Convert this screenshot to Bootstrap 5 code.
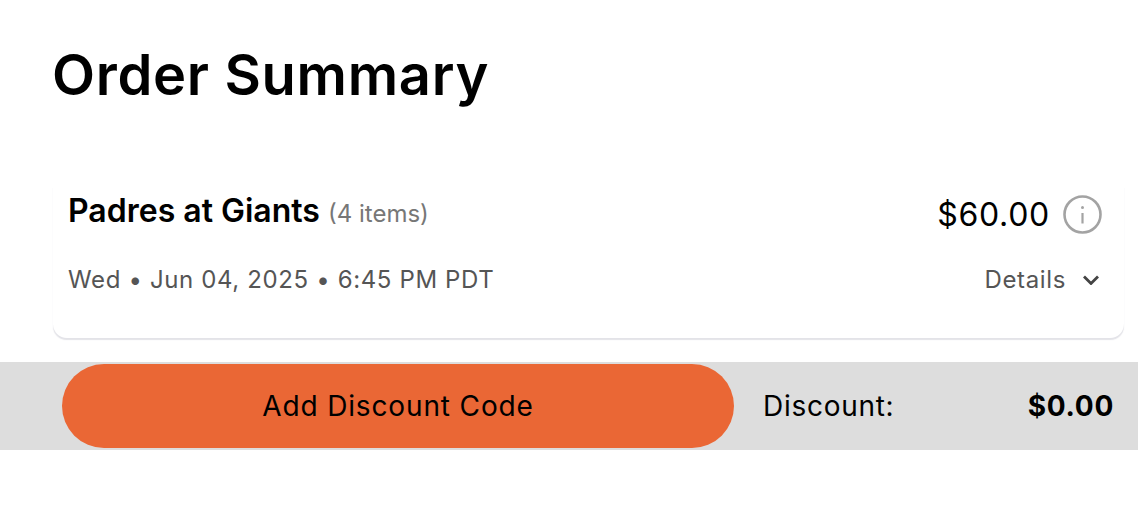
<!DOCTYPE html>
<html lang="en">
<head>
<meta charset="utf-8">
<title>Order Summary</title>
<link href="https://cdn.jsdelivr.net/npm/bootstrap@5.3.0/dist/css/bootstrap.min.css" rel="stylesheet">
<style>
html,body{background:#fff;font-family:Inter,"Liberation Sans",sans-serif;color:#000;overflow:hidden}
.os-title{font-size:56px;font-weight:600;line-height:68px;margin:0;padding:41px 0 0 52px;letter-spacing:.68px}
.os-card{margin:77px 14px 0 53px;height:152px;border-radius:0 0 14px 14px;box-shadow:0 2px 1px -.5px rgba(60,60,90,.14);padding:7px 22px 0 15px;display:flex;flex-direction:column}
.os-name{font-size:32px;font-weight:600;line-height:36px}
.os-count{font-size:24px;color:#777;font-weight:400}
.os-price{font-size:32px;line-height:38px;letter-spacing:.7px}
.os-right{margin-top:2px;gap:13px}
.os-row2{margin-top:31px}
.os-meta{font-size:24px;color:#555;letter-spacing:.63px;line-height:30px}
.os-details{gap:17px;margin-right:3px}
.os-bar{background:#dddddd;height:88px;margin-top:24px;padding-left:62px;padding-right:24px}
.os-btn{width:672px;height:84px;border-radius:42px;background:#ea6735;color:#000;font-size:28px;letter-spacing:.86px;border:0}
.os-lab{font-size:28px;margin-left:29px;letter-spacing:.72px}
.os-val{font-size:28px;font-weight:700;letter-spacing:.7px}
</style>
</head>
<body>
<h1 class="os-title">Order Summary</h1>
<div class="os-card">
<div class="d-flex justify-content-between align-items-start">
<div class="os-name">Padres at Giants <span class="os-count">(4 items)</span></div>
<div class="d-flex align-items-center os-right"><span class="os-price">$60.00</span>
<svg width="39" height="39" viewBox="0 0 39 39" fill="none" stroke="#a3a3a3" stroke-width="2.6"><circle cx="19.5" cy="19.5" r="18"/><path d="M19.5 18v10.5" stroke-width="2.2"/><circle cx="19.5" cy="12.5" r="1.5" fill="#a3a3a3" stroke="none"/></svg></div>
</div>
<div class="d-flex justify-content-between align-items-center os-row2">
<div class="os-meta">Wed • Jun 04, 2025 • 6:45 PM PDT</div>
<div class="os-meta d-flex align-items-center os-details">Details <svg width="16" height="10" viewBox="0 0 16 10" fill="none" stroke="#444" stroke-width="2.8"><path d="M1 1.5l7 7 7-7"/></svg></div>
</div>
</div>
<div class="os-bar d-flex align-items-center">
<button class="btn os-btn">Add Discount Code</button>
<span class="os-lab">Discount:</span>
<span class="os-val ms-auto">$0.00</span>
</div>
<script src="https://cdn.jsdelivr.net/npm/bootstrap@5.3.0/dist/js/bootstrap.bundle.min.js"></script>
</body>
</html>
